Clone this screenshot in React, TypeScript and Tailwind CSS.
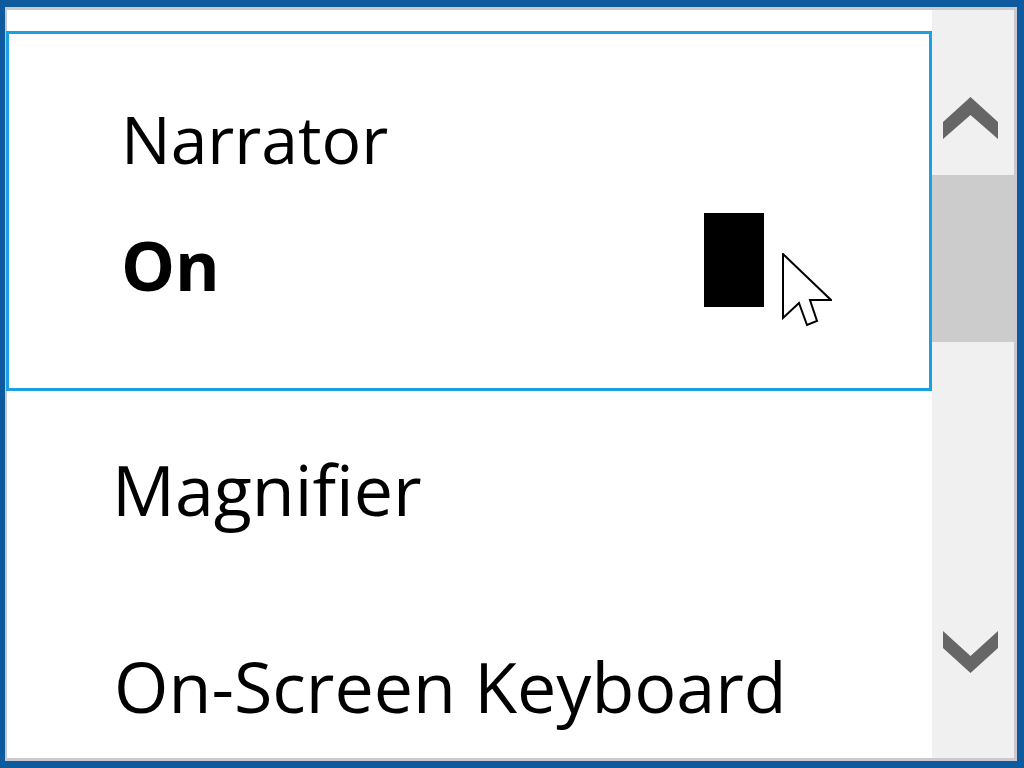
const font = { fontFamily: '"Open Sans", "Noto Sans", sans-serif' };

function ChevronUp() {
  return (
    <svg width="55" height="42" viewBox="0 0 55 42" className="block">
      <polygon points="0,25 27.5,0 55,25 55,42 27.5,18 0,42" fill="#666666" />
    </svg>
  );
}

function ChevronDown() {
  return (
    <svg width="55" height="42" viewBox="0 0 55 42" className="block">
      <polygon points="0,0 27.5,25 55,0 55,17 27.5,42 0,17" fill="#666666" />
    </svg>
  );
}

function Pointer() {
  return (
    <svg width="50" height="74" viewBox="-1 -1 50 74" className="block">
      <path
        d="M0 0 L0 64 L16 49 L24 71 L34 67 L27 46 L48 46 Z"
        fill="#ffffff"
        stroke="#000000"
        strokeWidth="2"
        strokeLinejoin="miter"
      />
    </svg>
  );
}

export default function App() {
  return (
    <div
      className="h-screen w-full overflow-hidden bg-[#0e5a9f] pl-[5px] pt-[7px] pr-[7px] pb-[7px]"
      style={font}
    >
      <div className="flex h-full border-l-2 border-t-[3px] border-r-[3px] border-b-[3px] border-[#c9c9cf] bg-white">
        {/* list */}
        <div className="flex-1 pt-[21px] text-black">
          <div className="-ml-[1px] border-[3px] border-[#1ba1e2] pl-[112px] pr-[165px] pt-[69px] pb-[88px]">
            <div className="h-[70px] text-[66px] leading-[70px]">Narrator</div>
            <div className="mt-[57px] flex h-[70px]">
              <div className="text-[68px] font-bold leading-[70px]">On</div>
              <div className="relative ml-auto -mt-[17px] h-[94px] w-[60px] bg-black">
                <div className="absolute left-[78px] top-[40px]">
                  <Pointer />
                </div>
              </div>
            </div>
          </div>
          <div className="mt-[63px] h-[71px] pl-[105px] text-[70px] leading-[71px]">Magnifier</div>
          <div className="mt-[126px] h-[71px] pl-[107px] text-[70px] leading-[71px]">
            On-Screen Keyboard
          </div>
        </div>

        {/* scrollbar */}
        <div className="flex w-[82px] flex-col bg-[#f0f0f0]">
          <div className="h-[165px] pl-[11px] pt-[87px]">
            <ChevronUp />
          </div>
          <div className="h-[167px] bg-[#cccccc]" />
          <div className="pl-[11px] pt-[289px]">
            <ChevronDown />
          </div>
        </div>
      </div>
    </div>
  );
}
